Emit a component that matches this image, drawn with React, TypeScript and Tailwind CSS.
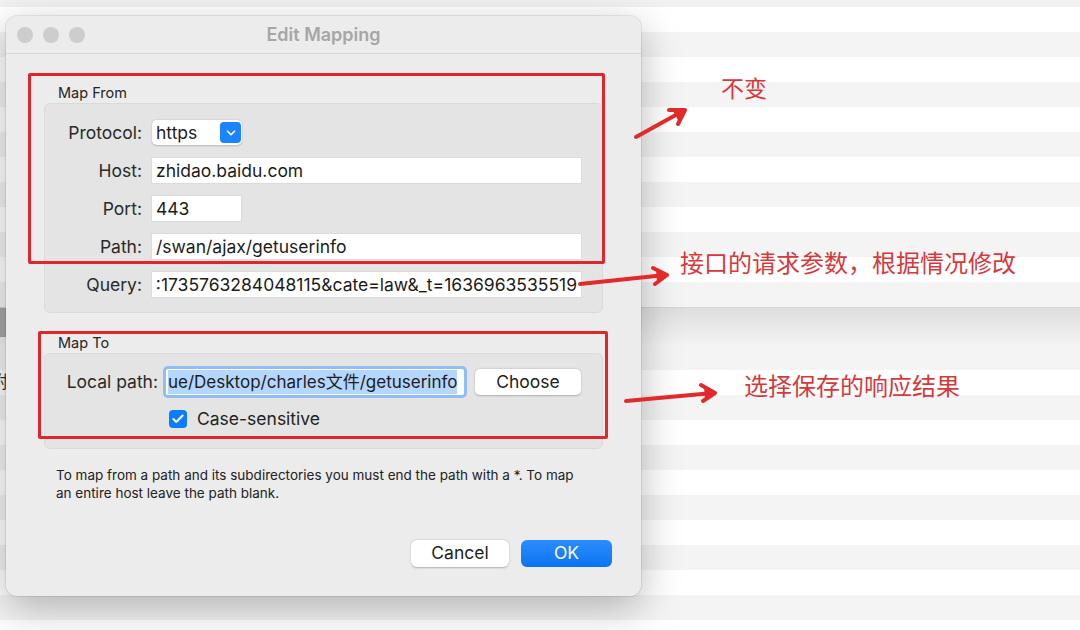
import { Check, ChevronDown } from 'lucide-react';

const upperRows = Array.from({ length: 12 }, (_, i) => i);
const lowerRows = Array.from({ length: 11 }, (_, i) => i);

function Field({ label, value, width, right }: { label: string; value: string; width: string; right?: boolean }) {
  return (
    <div className="flex items-center">
      <div className="w-[97px] text-right text-[17.5px] leading-[25px] text-[#2a2a2a]">{label}</div>
      <div
        className={`ml-[10px] flex h-[25px] items-center overflow-hidden bg-white px-[4px] text-[17.5px] leading-[25px] text-[#1c1c1c] shadow-[0_0_0_0.5px_rgba(0,0,0,0.08)] ${width} ${right ? 'justify-end' : ''}`}
      >
        <span className="whitespace-nowrap">{value}</span>
      </div>
    </div>
  );
}

function Arrows() {
  return (
    <svg className="pointer-events-none absolute left-0 top-0" width="1080" height="630">
      <g stroke="#e32a2a" strokeWidth="4" strokeLinecap="round" strokeLinejoin="round" fill="none">
        <path d="M636 137 L683 111" />
        <path d="M669 110 L685 110 L678 124" />
        <path d="M580 284 L665 275" />
        <path d="M653 268 L667 275 L655 284" />
        <path d="M626 401 L713 393" />
        <path d="M701 385 L715 393 L703 401" />
      </g>
      <g fill="#e32a2a">
        <path d="M672 109 L686 109 L679 122 Z" />
        <path d="M656 270 L667 275 L657 282 Z" />
        <path d="M704 387 L715 393 L705 399 Z" />
      </g>
    </svg>
  );
}

export default function App() {
  return (
    <div className="relative h-[630px] w-[1080px] overflow-hidden bg-white font-['Inter','Noto_Sans_CJK_SC',sans-serif]">
      {/* background windows */}
      <div className="flex flex-col">
        <div className="h-[7px] bg-[#f1f1f1]" />
        <div className="flex flex-col">
          {upperRows.map((i) => (
            <div key={i} className={i % 2 === 0 ? 'h-[25px] bg-white' : 'h-[25px] bg-[#f4f4f4]'} />
          ))}
        </div>
        <div className="h-px bg-[#d4d4d4]" />
        <div className="h-[37px] bg-gradient-to-b from-[#dedede] to-[#f3f3f3]" />
        <div className="flex flex-col">
          {lowerRows.map((i) => (
            <div key={i} className={i % 2 === 0 ? 'h-[25px] bg-[#f4f4f4]' : 'h-[25px] bg-white'} />
          ))}
        </div>
      </div>
      <div className="absolute left-0 top-[308px] h-[29px] w-[8px] bg-[#a8a8a8]" />
      <span className="absolute left-[-9px] top-[370px] text-[17px] text-[#333]">附</span>

      {/* dialog */}
      <div className="absolute left-[6px] top-[16px] flex h-[580px] w-[635px] flex-col rounded-[11px] bg-[#ececec] shadow-[0_12px_40px_rgba(0,0,0,0.28),0_0_0_1px_rgba(0,0,0,0.08)]">
        <div className="relative flex h-[38px] items-center justify-center border-b border-[#d8d8d8]">
          <div className="absolute left-[11px] top-[11px] flex gap-[10px]">
            <div className="h-[16px] w-[16px] rounded-full bg-[#cdcdcd]" />
            <div className="h-[16px] w-[16px] rounded-full bg-[#cdcdcd]" />
            <div className="h-[16px] w-[16px] rounded-full bg-[#cdcdcd]" />
          </div>
          <span className="text-[18px] font-semibold text-[#a6a6a6]">Edit Mapping</span>
        </div>

        <div className="flex flex-col px-[38px]">
          <div className="mt-[31px] pl-[14px] text-[14.5px] leading-[16px] text-[#262626]">Map From</div>
          <div className="mt-[2px] flex h-[210px] flex-col gap-[13px] rounded-[6px] border border-[#dadada] bg-[#e4e4e4] pt-[16px]">
            <div className="flex items-center">
              <div className="w-[97px] text-right text-[17.5px] leading-[25px] text-[#2a2a2a]">Protocol:</div>
              <div className="ml-[10px] flex h-[25px] w-[90px] items-center justify-between rounded-[5px] bg-white pl-[4px] pr-[1px] text-[17.5px] leading-[25px] text-[#1c1c1c] shadow-[0_0.5px_2px_rgba(0,0,0,0.2)]">
                <span>https</span>
                <div className="flex h-[21px] w-[21px] items-center justify-center rounded-[4px] bg-[#1b84fb]">
                  <ChevronDown size={14} strokeWidth={3} color="white" />
                </div>
              </div>
            </div>
            <Field label="Host:" value="zhidao.baidu.com" width="w-[429px]" />
            <Field label="Port:" value="443" width="w-[89px]" />
            <Field label="Path:" value="/swan/ajax/getuserinfo" width="w-[429px]" />
            <Field label="Query:" value=":1735763284048115&cate=law&_t=1636963535519" width="w-[429px]" right />
          </div>

          <div className="mt-[22px] pl-[14px] text-[14.5px] leading-[16px] text-[#262626]">Map To</div>
          <div className="mt-[2px] flex h-[96px] flex-col rounded-[6px] border border-[#dadada] bg-[#e4e4e4] pt-[15px]">
            <div className="flex items-center">
              <div className="w-[113px] text-right text-[17.5px] leading-[26px] text-[#2a2a2a]">Local path:</div>
              <div className="ml-[8px] flex h-[26px] w-[298px] items-center overflow-hidden rounded-[2px] bg-white px-[2px] text-[17px] leading-[24px] text-[#1c1c1c] shadow-[0_0_0_3px_#8fbdf4]">
                <span className="whitespace-nowrap bg-[#b5d6fd]">ue/Desktop/charles文件/getuserinfo</span>
              </div>
              <div className="ml-[11px] flex h-[26px] w-[106px] items-center justify-center rounded-[5px] bg-white text-[17.5px] text-[#222] shadow-[0_0.5px_2px_rgba(0,0,0,0.25)]">
                Choose
              </div>
            </div>
            <div className="ml-[124px] mt-[11px] flex items-center gap-[10px]">
              <div className="flex h-[18px] w-[18px] items-center justify-center rounded-[4px] bg-[#0b7cfd]">
                <Check size={14} strokeWidth={3.5} color="white" />
              </div>
              <span className="text-[17.5px] text-[#222]">Case-sensitive</span>
            </div>
          </div>

          <p className="mt-[17px] pl-[12px] text-[13.5px] leading-[18px] text-[#222]">
            To map from a path and its subdirectories you must end the path with a *. To map
            <br />
            an entire host leave the path blank.
          </p>
        </div>

        <div className="mt-auto mb-[29px] mr-[29px] flex justify-end gap-[12px]">
          <div className="flex h-[27px] w-[98px] items-center justify-center rounded-[6px] bg-white text-[17.5px] text-[#222] shadow-[0_0.5px_2px_rgba(0,0,0,0.25)]">
            Cancel
          </div>
          <div className="flex h-[27px] w-[91px] items-center justify-center rounded-[6px] bg-gradient-to-b from-[#2b8cfd] to-[#0874f2] text-[17.5px] text-white">
            OK
          </div>
        </div>
      </div>

      {/* annotations */}
      <div className="absolute left-[28px] top-[73px] h-[191px] w-[577px] rounded-[2px] border-[3.5px] border-[#e0262c]" />
      <div className="absolute left-[38px] top-[331px] h-[108px] w-[570px] rounded-[2px] border-[3.5px] border-[#e0262c]" />
      <Arrows />
      <span className="absolute left-[721px] top-[72px] text-[23px] text-[#d8383c]">不变</span>
      <span className="absolute left-[680px] top-[246px] text-[24px] text-[#d8383c]">接口的请求参数，根据情况修改</span>
      <span className="absolute left-[744px] top-[369px] text-[24px] text-[#d8383c]">选择保存的响应结果</span>
    </div>
  );
}
